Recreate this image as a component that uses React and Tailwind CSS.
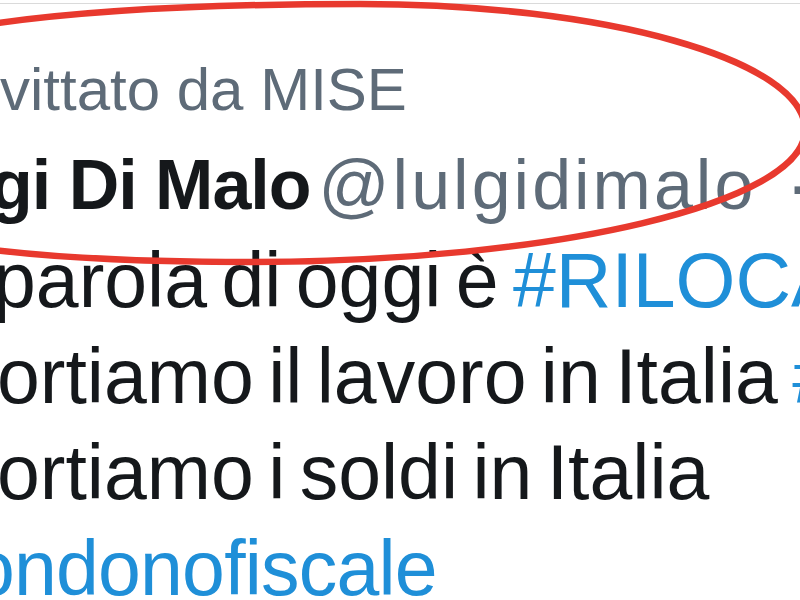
export default function App() {
  return (
    <div className="relative h-screen w-full overflow-hidden bg-white font-['Liberation_Sans',Arial,sans-serif] text-[#15181b]">
      <div className="h-[3px]" />
      <div className="border-t border-[#dadada] pt-[36px]">
        {/* retweet line */}
        <div className="whitespace-nowrap text-[60px] leading-[99px] text-[#5e6b78]">
          vittato da MISE
        </div>

        {/* author row */}
        <div className="flex items-baseline whitespace-nowrap leading-[93px]">
          <span className="-ml-[10px] text-[70px] font-bold tracking-[-1px]">gi Di Malo</span>
          <span className="ml-[8px] text-[70px] tracking-[3px] text-[#5e6b78]">@lulgidimalo</span>
          <span className="ml-[30px] text-[70px] text-[#5e6b78]">·</span>
        </div>

        {/* tweet body */}
        <div className="text-[77px] leading-[96px] [word-spacing:-7px]">
          <p className="-ml-[7px] whitespace-nowrap">
            parola di oggi è <span className="text-[#1f8fd8]">#RILOCALIZZAZIONE</span>
          </p>
          <p className="-ml-[3px] whitespace-nowrap">
            ortiamo il lavoro in Italia <span className="text-[#1f8fd8]">#rilocalizzazione</span>
          </p>
          <p className="-ml-[3px] whitespace-nowrap">ortiamo i soldi in Italia</p>
          <p className="-ml-[28px] whitespace-nowrap tracking-[-0.8px] text-[#1f8fd8]">ondonofiscale</p>
        </div>
      </div>

      {/* hand-drawn red circle */}
      <svg className="pointer-events-none absolute inset-0" width="800" height="600" viewBox="0 0 800 600">
        <path
          d="M 805 130 C 805 60 605 4 360 4 C 0 4 -220 40 -220 135 C -220 245 20 262 250 262 C 555 262 805 203 805 130 Z"
          fill="none"
          stroke="#e8392e"
          strokeWidth="6.5"
        />
      </svg>
    </div>
  );
}
